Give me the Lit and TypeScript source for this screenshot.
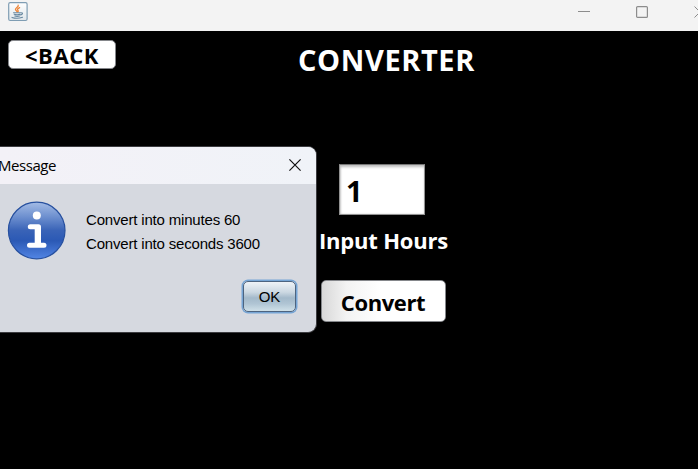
import { LitElement, html, css } from "lit";
import { customElement, property } from "lit/decorators.js";

@customElement("title-bar")
class TitleBar extends LitElement {
  static styles = css`
    :host { display: flex; height: 31px; background: #f3f3f3; justify-content: space-between; overflow: hidden; flex: none; }
    .logo { margin: 2px 0 0 8px; width: 20px; height: 20px; flex: none; }
    .controls { display: flex; gap: 46px; margin: 6px -8px 0 0; flex: none; }
    .controls svg { width: 12px; height: 12px; display: block; }
  `;
  render() {
    return html`
      <svg class="logo" viewBox="0 0 20 20">
        <defs><linearGradient id="g" x2="0" y2="1"><stop stop-color="#fff"/><stop offset="1" stop-color="#dfe6ea"/></linearGradient></defs>
        <rect x=".7" y=".7" width="18.4" height="17.8" rx="1.5" fill="url(#g)" stroke="#7f9db3" stroke-width="1.2"/>
        <g fill="none" stroke-linecap="round">
          <path d="M10.2 3.2C11 5 7.200 5.800 7.500 7.500C7.800 8.500 9 9 9 9.900M11.600 5.600C9.300 6.700 9 7.500 10 8.500C10.400 9 10.300 9.500 9.800 9.900" stroke="#ee8436" stroke-width="1.300"/>
          <path d="M5.500 10.800H12.500M6.200 12.300Q9 13.300 12 12.300M6.800 14Q9 14.800 11.600 14M13 10.700Q15.500 10.800 14 12.300L12.700 13M4 15.400Q9 17.200 14.500 15.200" stroke="#6888a0" stroke-width="1.100"/>
        </g>
      </svg>
      <div class="controls">
        <svg viewBox="0 0 12 12"><path d="M0 5.500H12" stroke="#8c8c8c"/></svg>
        <svg viewBox="0 0 12 12"><rect x=".6" y=".6" width="10.800" height="10.800" rx="1" fill="none" stroke="#8c8c8c" stroke-width="1.200"/></svg>
        <svg viewBox="0 0 12 12"><path d="M.5 .5L11.500 11.500M11.500 .5L.5 11.500" stroke="#8c8c8c"/></svg>
      </div>`;
  }
}

@customElement("message-dialog")
class MessageDialog extends LitElement {
  @property({ attribute: false }) lines: string[] = [];
  static styles = css`
    :host { display: flex; flex-direction: column; box-sizing: border-box; background: #d6d9e0; color: #000; border: 1px solid #3c3c40; border-left: 0; border-radius: 0 9px 9px 0; overflow: hidden; }
    .bar { height: 37px; flex: none; display: flex; align-items: center; justify-content: space-between; background: linear-gradient(90deg, #f3f1f7, #f0f3f8); padding-right: 15px; }
    .title { font: 15px/20px "Open Sans", "Noto Sans", sans-serif; margin: -1px 0 0 -2px; letter-spacing: -0.45px; }
    .close { width: 12px; height: 12px; margin-top: -1px; }
    .body { display: flex; padding: 17px 0 0 7px; gap: 20px; }
    .info { width: 59px; height: 59px; flex: none; }
    .lines { font: 15px/24px "Liberation Sans", Arial, sans-serif; letter-spacing: -0.18px; padding-top: 7px; white-space: nowrap; }
    .ok { align-self: flex-end; box-sizing: border-box; width: 53px; height: 31px; margin: 21px 20px 0 0; border: 1.5px solid #4d6480; border-radius: 5px; box-shadow: 0 0 0 1.5px #76a5d5; background: linear-gradient(#eff3f7, #ccd8e2 35%, #a3b9ca 55%, #b0c5d4 75%, #cfe0e8); display: grid; place-items: center; font: 15px/18px "Liberation Sans", Arial, sans-serif; }
  `;
  render() {
    return html`
      <div class="bar">
        <span class="title">Message</span>
        <svg class="close" viewBox="0 0 12 12"><path d="M.4 .4L11.600 11.600M11.600 .4L.4 11.600" stroke="#111" stroke-width="1.200"/></svg>
      </div>
      <div class="body">
        <svg class="info" viewBox="0 0 59 59">
          <defs><linearGradient id="b" x2="0" y2="1"><stop stop-color="#a3bbe5"/><stop offset=".25" stop-color="#6f91d0"/><stop offset=".5" stop-color="#3963b7"/><stop offset=".68" stop-color="#2b59b5"/><stop offset="1" stop-color="#5285e4"/></linearGradient></defs>
          <circle cx="29.700" cy="29.500" r="28.300" fill="url(#b)" stroke="#27509f" stroke-width="1.200"/>
          <circle cx="29.800" cy="14.600" r="4" fill="#fff"/>
          <path d="M23.300 25.700H31.500V44.200M22.500 44.200H37" fill="none" stroke="#fff" stroke-width="5" stroke-linecap="round" stroke-linejoin="round"/>
          <path d="M27.700 26H34V44H27.700Z" fill="#fff"/>
        </svg>
        <div class="lines">${this.lines.map((l) => html`<div>${l}</div>`)}</div>
      </div>
      <div class="ok">OK</div>`;
  }
}

@customElement("app-root")
class AppRoot extends LitElement {
  static styles = css`
    :host { display: flex; flex-direction: column; position: relative; width: 698px; height: 469px; overflow: hidden; background: #000; color: #fff; font-family: "Open Sans", "Noto Sans", sans-serif; font-weight: 700; }
    .head { display: flex; height: 133px; flex: none; align-items: flex-start; }
    .btn { box-sizing: border-box; display: grid; place-items: center; color: #000; background: #fff; border: 1.5px solid #85878b; border-radius: 5px; font-size: 22px; line-height: 28px; white-space: nowrap; }
    .back { width: 108px; height: 29px; margin: 9px 0 0 8px; letter-spacing: 0.6px; }
    h1 { margin: 9px 0 0 182px; font-size: 29px; line-height: 40px; letter-spacing: 0.6px; white-space: nowrap; }
    .form { display: flex; flex-direction: column; align-items: center; width: 130px; margin-left: 318px; }
    .field { box-sizing: border-box; width: 86px; height: 51px; margin-left: -2px; border: 1.5px solid #929292; border-top-color: #777; background: #fff; box-shadow: inset 0 3px 3px -1px #bbb, inset 1px 0 2px #ccc; color: #000; font-size: 29px; line-height: 52px; padding-left: 6px; }
    .label { font-size: 22px; line-height: 30px; margin: 10px 0 0 1px; letter-spacing: -0.2px; white-space: nowrap; }
    .convert { width: 125px; height: 42px; margin-top: 25px; padding-top: 2px; letter-spacing: -0.4px; background: linear-gradient(90deg, #d8d8d8, #f3f3f3 20%, #fff 48%); }
    message-dialog { position: absolute; left: 0; top: 146px; width: 317px; height: 187px; font-weight: 400; }
  `;
  render() {
    return html`
      <title-bar></title-bar>
      <div class="head">
        <div class="btn back"><span>&lt;BACK</span></div>
        <h1>CONVERTER</h1>
      </div>
      <div class="form">
        <div class="field">1</div>
        <div class="label">Input Hours</div>
        <div class="btn convert"><span>Convert</span></div>
      </div>
      <message-dialog .lines=${["Convert into minutes 60", "Convert into seconds 3600"]}></message-dialog>`;
  }
}
